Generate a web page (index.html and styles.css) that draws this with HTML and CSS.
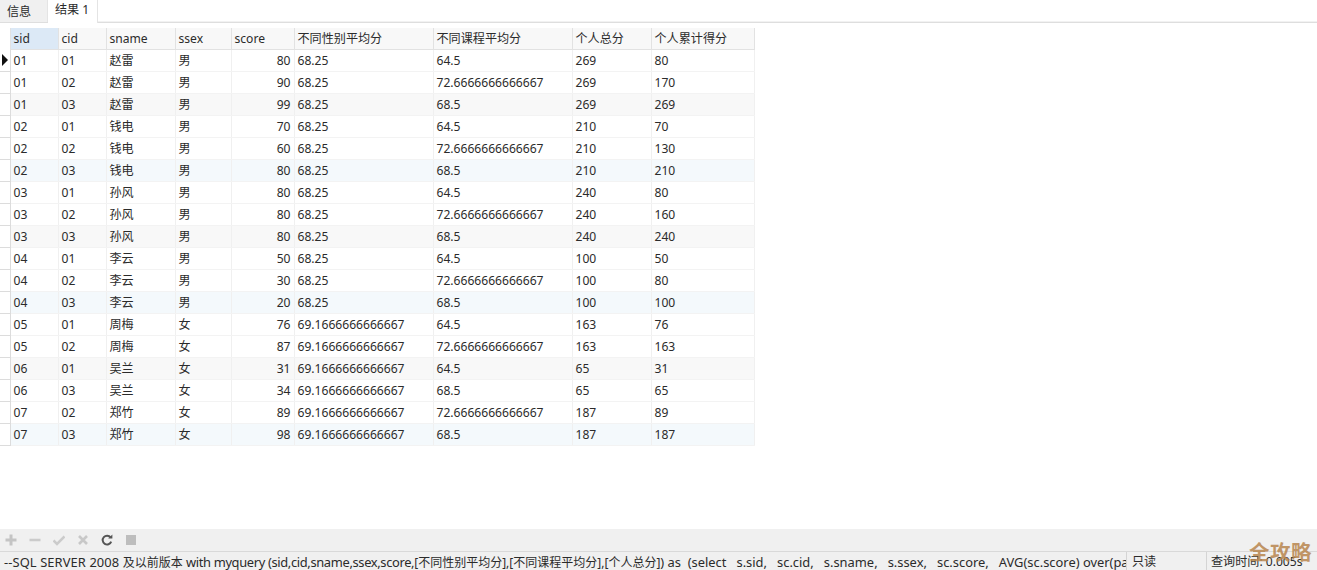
FILE: index.html
```html
<!DOCTYPE html>
<html lang="zh-CN">

<head>
    <meta charset="UTF-8">
    <title>结果 1</title>
    <link rel="stylesheet" href="styles.css">
</head>

<body>
    <div class="window">
        <div class="tabs">
            <div class="tab">信息</div>
            <div class="tab active">结果 1</div>
        </div>

        <div class="grid-wrap">
            <table class="grid">
                <colgroup>
                    <col class="c-mark">
                    <col class="c-sid">
                    <col class="c-cid">
                    <col class="c-sname">
                    <col class="c-ssex">
                    <col class="c-score">
                    <col class="c-sex-avg">
                    <col class="c-course-avg">
                    <col class="c-total">
                    <col class="c-running">
                </colgroup>
                <thead>
                    <tr>
                        <th class="mark"></th>
                        <th class="selected">sid</th>
                        <th>cid</th>
                        <th>sname</th>
                        <th>ssex</th>
                        <th>score</th>
                        <th>不同性别平均分</th>
                        <th>不同课程平均分</th>
                        <th>个人总分</th>
                        <th>个人累计得分</th>
                    </tr>
                </thead>
                <tbody>
                    <tr><td class="mark"><span class="current"></span></td><td>01</td><td>01</td><td>赵雷</td><td>男</td><td class="num">80</td><td>68.25</td><td>64.5</td><td>269</td><td>80</td></tr>
                    <tr><td class="mark"></td><td>01</td><td>02</td><td>赵雷</td><td>男</td><td class="num">90</td><td>68.25</td><td>72.6666666666667</td><td>269</td><td>170</td></tr>
                    <tr class="gray"><td class="mark"></td><td>01</td><td>03</td><td>赵雷</td><td>男</td><td class="num">99</td><td>68.25</td><td>68.5</td><td>269</td><td>269</td></tr>
                    <tr><td class="mark"></td><td>02</td><td>01</td><td>钱电</td><td>男</td><td class="num">70</td><td>68.25</td><td>64.5</td><td>210</td><td>70</td></tr>
                    <tr><td class="mark"></td><td>02</td><td>02</td><td>钱电</td><td>男</td><td class="num">60</td><td>68.25</td><td>72.6666666666667</td><td>210</td><td>130</td></tr>
                    <tr class="blue"><td class="mark"></td><td>02</td><td>03</td><td>钱电</td><td>男</td><td class="num">80</td><td>68.25</td><td>68.5</td><td>210</td><td>210</td></tr>
                    <tr><td class="mark"></td><td>03</td><td>01</td><td>孙风</td><td>男</td><td class="num">80</td><td>68.25</td><td>64.5</td><td>240</td><td>80</td></tr>
                    <tr><td class="mark"></td><td>03</td><td>02</td><td>孙风</td><td>男</td><td class="num">80</td><td>68.25</td><td>72.6666666666667</td><td>240</td><td>160</td></tr>
                    <tr class="gray"><td class="mark"></td><td>03</td><td>03</td><td>孙风</td><td>男</td><td class="num">80</td><td>68.25</td><td>68.5</td><td>240</td><td>240</td></tr>
                    <tr><td class="mark"></td><td>04</td><td>01</td><td>李云</td><td>男</td><td class="num">50</td><td>68.25</td><td>64.5</td><td>100</td><td>50</td></tr>
                    <tr><td class="mark"></td><td>04</td><td>02</td><td>李云</td><td>男</td><td class="num">30</td><td>68.25</td><td>72.6666666666667</td><td>100</td><td>80</td></tr>
                    <tr class="blue"><td class="mark"></td><td>04</td><td>03</td><td>李云</td><td>男</td><td class="num">20</td><td>68.25</td><td>68.5</td><td>100</td><td>100</td></tr>
                    <tr><td class="mark"></td><td>05</td><td>01</td><td>周梅</td><td>女</td><td class="num">76</td><td>69.1666666666667</td><td>64.5</td><td>163</td><td>76</td></tr>
                    <tr><td class="mark"></td><td>05</td><td>02</td><td>周梅</td><td>女</td><td class="num">87</td><td>69.1666666666667</td><td>72.6666666666667</td><td>163</td><td>163</td></tr>
                    <tr class="gray"><td class="mark"></td><td>06</td><td>01</td><td>吴兰</td><td>女</td><td class="num">31</td><td>69.1666666666667</td><td>64.5</td><td>65</td><td>31</td></tr>
                    <tr><td class="mark"></td><td>06</td><td>03</td><td>吴兰</td><td>女</td><td class="num">34</td><td>69.1666666666667</td><td>68.5</td><td>65</td><td>65</td></tr>
                    <tr><td class="mark"></td><td>07</td><td>02</td><td>郑竹</td><td>女</td><td class="num">89</td><td>69.1666666666667</td><td>72.6666666666667</td><td>187</td><td>89</td></tr>
                    <tr class="blue"><td class="mark"></td><td>07</td><td>03</td><td>郑竹</td><td>女</td><td class="num">98</td><td>69.1666666666667</td><td>68.5</td><td>187</td><td>187</td></tr>
                </tbody>
            </table>
        </div>

        <div class="toolbar">
            <svg class="tool" viewBox="0 0 12 12"><path d="M6 0.5v11M0.5 6h11" stroke="#c4c4c4" stroke-width="3" fill="none"/></svg>
            <svg class="tool" viewBox="0 0 12 12"><path d="M0.5 6h11" stroke="#cbcbcb" stroke-width="2.5" fill="none"/></svg>
            <svg class="tool" viewBox="0 0 12 12"><path d="M0.5 6.5l3.5 3.5l7.5-7.5" stroke="#cbcbcb" stroke-width="2.5" fill="none"/></svg>
            <svg class="tool" viewBox="0 0 12 12"><path d="M2 2l8 8M10 2l-8 8" stroke="#c8c8c8" stroke-width="2.6" fill="none"/></svg>
            <svg class="tool" viewBox="0 0 12 12"><path d="M9.6 3.4a4.4 4.4 0 1 0 0.6 4.2" stroke="#555" stroke-width="2" fill="none"/><path d="M7.2 4.6h4.2v-4.2z" fill="#555"/></svg>
            <svg class="tool" viewBox="0 0 12 12"><rect x="1" y="1" width="10" height="10" fill="#bdbdbd"/></svg>
        </div>

        <div class="status">
            <div class="status-sql"><span class="sql-wide">--SQL SERVER 2008</span> <span class="sql-cjk">及以前版本</span> <span class="sql-tight">with myquery (sid,cid,sname,ssex,score,</span><span class="sql-cjk">[不同性别平均分],[不同课程平均分],[个人总分]</span>) as  (select   s.sid,   sc.cid,   s.sname,   s.ssex,   sc.score,   AVG(sc.score) over(pa</div>
            <div class="status-mode">只读</div>
            <div class="status-time">查询时间: 0.005s</div>
        </div>

        <div class="watermark">全攻略</div>
    </div>
</body>

</html>
```

FILE: styles.css
```css
* {
    margin: 0;
    padding: 0;
    box-sizing: border-box;
}

body {
    font-family: "Noto Sans", "Noto Sans CJK SC", sans-serif;
    font-size: 12.1px;
    color: #2b2b2b;
    background: #fff;
    overflow: hidden;
}

.window {
    position: relative;
    display: flex;
    flex-direction: column;
    height: 570px;
}

/* tabs */
.tabs {
    display: flex;
    height: 23px;
    border-bottom: 1px solid #dedede;
    box-shadow: 0 -5px 0 -4px #f2f2f2 inset;
}

.tab {
    width: 48px;
    padding-left: 7px;
    line-height: 23px;
    background: #f0f0f0;
    border-right: 1px solid #e4e4e4;
}

.tab.active {
    width: 50px;
    padding-left: 7px;
    line-height: 20px;
    height: 23px;
    background: #fff;
    border-right: 1px solid #e4e4e4;
}

/* data grid */
.grid-wrap {
    flex: 1;
    padding-top: 5px;
}

.grid {
    table-layout: fixed;
    width: 754px;
    border-collapse: collapse;
}

.c-mark { width: 10px; }
.c-sid { width: 48px; }
.c-cid { width: 48px; }
.c-sname { width: 69px; }
.c-ssex { width: 56px; }
.c-score { width: 63px; }
.c-sex-avg { width: 139px; }
.c-course-avg { width: 139px; }
.c-total { width: 79px; }
.c-running { width: 103px; }

.grid th,
.grid td {
    height: 22px;
    padding: 0 3px;
    text-align: left;
    font-weight: normal;
    white-space: nowrap;
    overflow: hidden;
    border-right: 1px solid #f0f0f0;
    border-bottom: 1px solid #f3f3f3;
}

.grid th {
    height: 21px;
    background: #f8f8f8;
    border-right: 1px solid #e2e2e2;
    border-bottom: 1px solid #e2e2e2;
}

.grid th.selected {
    background: #dce9f6;
}

.grid th.mark {
    background: #fff;
    border-bottom: none;
}

.grid td.mark {
    padding: 0;
    background: #fff;
    border-right: 1px solid #dcdcdc;
    border-bottom: 1px solid #dcdcdc;
}

.grid td.num {
    text-align: right;
}

.grid tr.gray td {
    background: #f8f8f8;
}

.grid tr.blue td {
    background: #f4f9fc;
}

.grid tr.gray td.mark,
.grid tr.blue td.mark {
    background: #fff;
}

.current {
    display: block;
    width: 0;
    height: 0;
    margin-left: 2px;
    border-left: 6px solid #111;
    border-top: 6px solid transparent;
    border-bottom: 6px solid transparent;
}

/* bottom bars */
.toolbar {
    display: flex;
    align-items: center;
    gap: 12px;
    height: 23px;
    padding-left: 5px;
    background: #f0f0f0;
    border-bottom: 1px solid #d9d9d9;
}

.tool {
    width: 12px;
    height: 12px;
}

.status {
    display: flex;
    height: 18px;
    line-height: 20px;
    background: #f0f0f0;
}

.status-sql {
    width: 1127px;
    padding-left: 4px;
    padding-right: 2px;
    font-size: 12.9px;
    white-space: pre;
    overflow: hidden;
    border-right: 1px solid #d4d4d4;
}

.sql-wide {
    letter-spacing: 0.1px;
}

.sql-tight {
    letter-spacing: -0.35px;
}

.sql-cjk {
    font-size: 12px;
}

.status-mode {
    width: 80px;
    padding-left: 5px;
    border-right: 1px solid #d4d4d4;
}

.status-time {
    flex: 1;
    padding-left: 4px;
    white-space: nowrap;
}

.watermark {
    position: absolute;
    right: 5px;
    bottom: 6px;
    font-size: 20.5px;
    font-weight: bold;
    line-height: 24px;
    letter-spacing: 0.5px;
    color: #b8864e;
    opacity: 0.85;
}
```
